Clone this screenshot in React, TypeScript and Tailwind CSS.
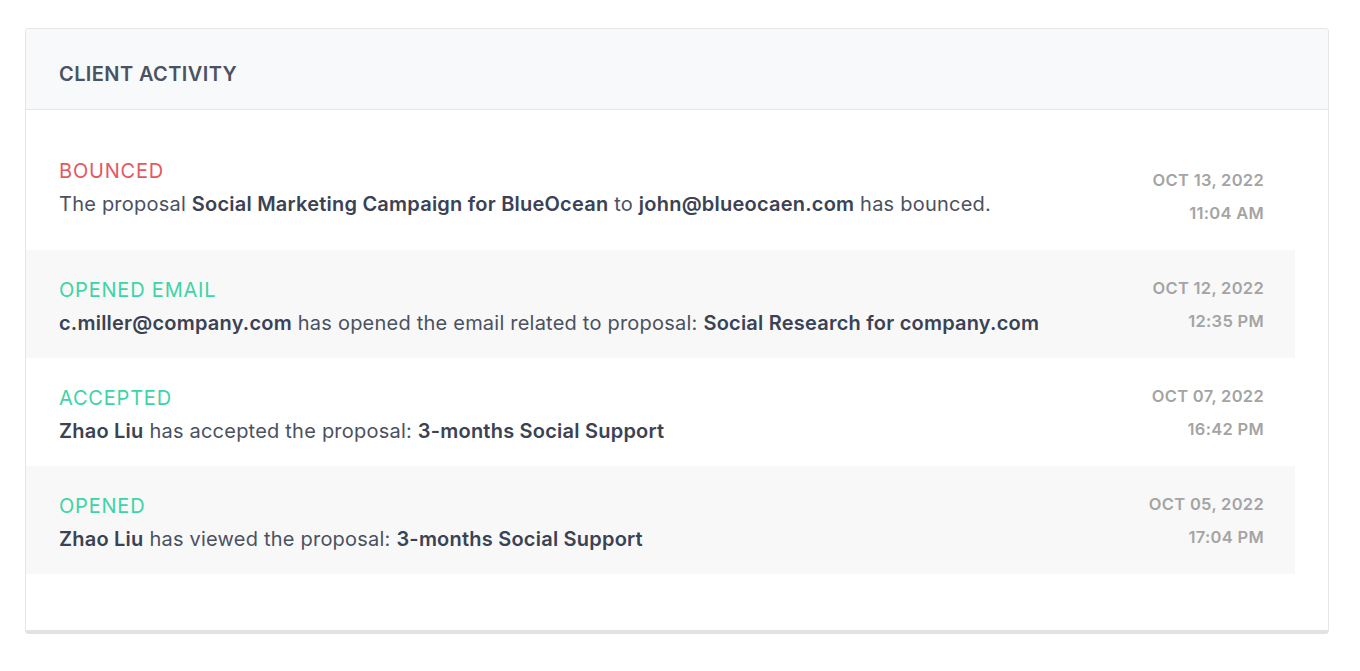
const activities = [
  {
    status: 'BOUNCED',
    tone: 'red',
    date: 'OCT 13, 2022',
    time: '11:04 AM',
    body: (
      <>
        The proposal <b className="font-semibold text-[#3a4254]">Social Marketing Campaign for BlueOcean</b> to{' '}
        <b className="font-semibold text-[#3a4254]">john@blueocaen.com</b> has bounced.
      </>
    ),
  },
  {
    status: 'OPENED EMAIL',
    tone: 'green',
    date: 'OCT 12, 2022',
    time: '12:35 PM',
    body: (
      <>
        <b className="font-semibold text-[#3a4254]">c.miller@company.com</b> has opened the email related to proposal:{' '}
        <b className="font-semibold text-[#3a4254]">Social Research for company.com</b>
      </>
    ),
  },
  {
    status: 'ACCEPTED',
    tone: 'green',
    date: 'OCT 07, 2022',
    time: '16:42 PM',
    body: (
      <>
        <b className="font-semibold text-[#3a4254]">Zhao Liu</b> has accepted the proposal:{' '}
        <b className="font-semibold text-[#3a4254]">3-months Social Support</b>
      </>
    ),
  },
  {
    status: 'OPENED',
    tone: 'green',
    date: 'OCT 05, 2022',
    time: '17:04 PM',
    body: (
      <>
        <b className="font-semibold text-[#3a4254]">Zhao Liu</b> has viewed the proposal:{' '}
        <b className="font-semibold text-[#3a4254]">3-months Social Support</b>
      </>
    ),
  },
]

export default function App() {
  return (
    <div className="min-h-screen bg-white pl-[25px] pr-[31px] pt-[28px] font-['Inter',sans-serif]">
      <div className="overflow-hidden rounded-[4px] border border-[#e4e6e9] border-b-4 border-b-[#e2e2e2] bg-white">
        <div className="flex h-[81px] items-center border-b border-[#e4e6e9] bg-[#f8f9fa] px-[33px] pt-[10px]">
          <h2 className="text-[20px] font-semibold tracking-[0.4px] text-[#4b5261]">CLIENT ACTIVITY</h2>
        </div>
        <div className="mr-[33px] pt-[32px] pb-[56px]">
          {activities.map((a, i) => (
            <div
              key={a.status}
              className={`flex h-[108px] items-center justify-between pl-[33px] pr-[31px] ${i % 2 === 1 ? 'bg-[#f8f8f8]' : 'bg-white'}`}
            >
              <div className={`flex flex-col gap-[9px] ${i === 0 ? 'mb-[17px]' : 'mt-[5px]'}`}>
                <span
                  className={`text-[20px] leading-[24px] tracking-[0.8px] ${a.tone === 'red' ? 'text-[#e5585f]' : 'text-[#3dd4a6]'}`}
                >
                  {a.status}
                </span>
                <p className="text-[20px] leading-[24px] tracking-[0.22px] text-[#4a5160]">{a.body}</p>
              </div>
              <div className="flex flex-col items-end gap-[9px] text-[16.5px] font-semibold leading-[24px] tracking-[0.3px] text-[#a4a4a4]">
                <span>{a.date}</span>
                <span>{a.time}</span>
              </div>
            </div>
          ))}
        </div>
      </div>
    </div>
  )
}
